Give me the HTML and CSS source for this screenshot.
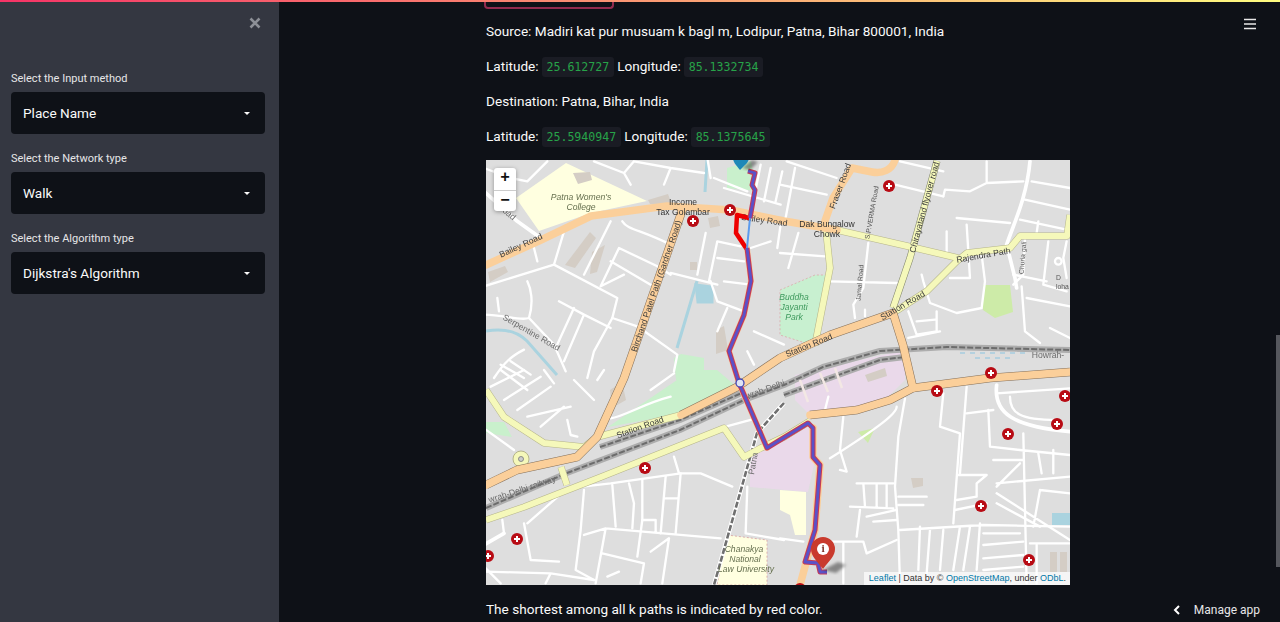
FILE: index.html
```html
<!DOCTYPE html>
<html lang="en">
<head>
<meta charset="utf-8">
<title>Shortest Path</title>
<link rel="stylesheet" href="styles.css">
</head>
<body>
<div class="decoration"></div>
<aside class="sidebar">
  <div class="sidebar-head">
    <svg class="close-icon" viewBox="0 0 12 12"><path d="M1.5 1.5l9 9M10.5 1.5l-9 9"/></svg>
  </div>
  <div class="field">
    <label class="field-label">Select the Input method</label>
    <div class="select"><span>Place Name</span><i class="caret"></i></div>
  </div>
  <div class="field">
    <label class="field-label">Select the Network type</label>
    <div class="select"><span>Walk</span><i class="caret"></i></div>
  </div>
  <div class="field">
    <label class="field-label">Select the Algorithm type</label>
    <div class="select"><span>Dijkstra's Algorithm</span><i class="caret"></i></div>
  </div>
</aside>
<main class="main">
  <div class="column">
    <div class="cut-button"></div>
    <p class="line first">Source: Madiri kat pur musuam k bagl m, Lodipur, Patna, Bihar 800001, India</p>
    <p class="line">Latitude: <code>25.612727</code> Longitude: <code>85.1332734</code></p>
    <p class="line">Destination: Patna, Bihar, India</p>
    <p class="line">Latitude: <code>25.5940947</code> Longitude: <code>85.1375645</code></p>
    <div class="map">
      <svg class="map-svg" viewBox="486 160 584 425">
        <defs>
          <filter id="pinblur"><feGaussianBlur stdDeviation="1.5"/></filter>
        </defs>
        <g class="soft">
          <rect x="486" y="160" width="584" height="425" class="land"/>
          <!-- areas -->
          <polygon class="college" points="516,198 566,163 647,201 591,213 539,231"/>
          <polygon class="park" points="727,168 751,161 757,191 727,188"/>
          <polygon class="park" points="674,358 681,354 704,358 704,378 676,380"/>
          <polygon class="bud" points="780,290 815,275 827,275 812,345 780,335"/>
          <polygon class="grass" points="983,285 1010,285 1013,312 995,318 983,310"/>
          <polygon class="park" points="608,427 677,380 677,370 717,370 737,387 684,413"/>
          <polygon class="park" points="486,422 504,422 512,437 486,433"/>
          <polygon class="lilac" points="795,375 905,350 905,380 880,405 810,415 795,400"/>
          <polygon class="lilac" points="750,487 750,448 784,440 808,426 815,460 808,492"/>
          <polygon class="college" points="780,490 806,492 806,535 795,535 790,515 780,510"/>
          <polygon class="campus" points="727,535 767,540 767,585 717,585"/>
          <polygon class="grass" points="858,432 875,428 868,443"/>
          <!-- buildings -->
          <g class="bld">
            <polygon points="573,173 590,172 592,180 578,184"/>
            <polygon points="488,272 505,266 508,272 490,282"/>
            <polygon points="565,265 590,232 596,238 575,268"/>
            <polygon points="592,252 605,245 597,272 590,274"/>
            <polygon points="648,200 668,194 672,205 650,204"/>
            <polygon points="708,218 718,216 720,226 710,228"/>
            <polygon points="690,262 697,262 697,270 690,270"/>
            <polygon points="716,330 724,326 728,350 716,354"/>
            <polygon points="610,390 622,382 626,400 612,408"/>
            <polygon points="865,375 885,368 887,376 868,382"/>
            <polygon points="911,478 923,478 923,486 913,488"/>
            <polygon points="1050,552 1057,552 1057,572 1050,572"/>
            <polygon points="1060,552 1067,552 1067,572 1060,572"/>
          </g>
          <!-- water -->
          <g class="water">
            <path d="M486 331C503 328 517 331 527 341L557 375"/>
            <path d="M697 281L677 348M707 160L705 192"/>
            <path class="fillw" d="M696 285L712 287L712 302L698 302Z"/>
            <path d="M960 353H1030M975 358H1010" class="dash"/>
          </g>
          <rect x="1052" y="513" width="18" height="12" class="pond"/>
          <!-- white streets: top left -->
          <g class="st" transform="translate(484 158) scale(.3333)">
            <path d="M0 30L80 60L130 70L190 10M330 10L420 45L450 10M450 10L560 30L660 45M560 30L540 80M420 45L440 80"/>
            <path class="wide" d="M0 100L100 190L170 240"/>
            <path d="M240 220L210 320L0 385M210 320L400 420L385 480L330 580L310 660M380 190L300 350M405 270L350 385M405 270L520 325M380 310L500 380M350 385L420 350M150 270L160 310"/>
            <path d="M0 470C60 470 110 490 135 480C150 430 140 390 130 370M135 480L210 560L245 640M40 420L45 460"/>
            <path d="M225 430L300 470L240 610M270 450L215 570M385 480L460 505M300 470L380 510M120 575C70 600 50 630 30 660M50 620L120 660M80 610L140 650"/>
            <path d="M415 190C430 215 470 215 560 260M560 345L700 380M520 325L560 350M665 225L640 350M700 250L675 370M700 250L770 265M700 300L780 310M680 370L700 430L780 460M720 370L800 380M730 450L700 520"/>
            <path d="M690 60L790 100M670 0L680 60M720 90L890 140M830 20L810 120M860 30L840 130M895 40L875 130M800 270L860 250M890 200L880 270M810 520L900 560M790 580L810 620M460 505L580 590L570 640"/>
          </g>
          <!-- white streets: top right -->
          <g class="st" transform="translate(780 158) scale(.3333)">
            <path d="M20 10L170 60M0 80L140 110M45 30L15 190M55 225L25 330M0 285L135 295M360 10L490 40M345 80L490 115"/>
            <path d="M490 115L495 95L570 100L620 75L730 70M620 10L620 70"/>
            <path class="wide" d="M750 10C740 120 700 200 680 260L705 360L710 390"/>
            <path d="M755 70L870 90M735 125L870 155M530 180L690 195M720 185L860 215M775 190L770 225M500 220L500 280M560 200L570 360L510 360"/>
            <path d="M605 290L615 370L605 450L530 465L450 435L430 370L425 350M265 255L250 390L220 440L225 480M255 455L255 475M150 370L350 375"/>
            <path d="M385 460L410 530L470 520L470 460M410 490L465 485M385 540L480 520M735 240L730 350L700 380M805 250L790 380L860 400M860 250L850 300L860 360M700 350L800 370M725 385L735 520L780 555M740 420L870 445M810 510L870 540"/>
            <circle cx="835" cy="310" r="10"/>
          </g>
          <!-- white streets: bottom left -->
          <g class="st" transform="translate(484 370) scale(.3333)">
            <path d="M0 175L90 240M20 50L120 0M60 90L170 20M100 120L200 50M130 140L260 110M170 170L240 110M180 0L210 40M130 60L50 0M250 150L260 195L280 200M270 30L330 90M340 30L360 0M500 60L570 10M380 145C420 140 480 100 560 80"/>
            <path d="M250 355L380 340L590 310L650 310L745 350M130 460L250 355M55 450L60 490M120 460L140 570L225 575"/>
            <path class="wide" d="M0 525L60 490"/>
            <path d="M300 360L290 480L275 600L330 630M385 345L395 470M435 340L450 400L445 475M475 330L475 450L460 560M545 320L530 490M590 310L575 490M545 385L580 385"/>
            <path d="M300 495L365 475L710 505M475 450L515 450L515 485M365 475L335 640M355 550L480 580L470 640M555 505L500 545M555 505L535 640M0 605L200 610L185 640M200 610L330 630M0 590L50 640M370 620L405 605M790 350L785 490M785 490L900 510M725 170L800 150M570 260L585 310"/>
          </g>
          <!-- white streets: bottom right -->
          <g class="st" transform="translate(780 370) scale(.3333)">
            <path d="M145 80L135 120M190 140L180 240L200 305L180 300M350 110C350 130 300 170 150 265M375 85L355 200L345 350L355 480L360 640"/>
            <path d="M490 70L480 170L540 190L520 460M560 50L540 310M560 130L640 120"/>
            <path class="wide" d="M650 45C640 130 700 170 870 185"/>
            <path d="M650 70L870 55M690 80C690 130 720 150 830 150M625 120L630 230L720 240L870 255M730 190L740 640M640 270L730 270M650 350L720 280M650 340L870 320"/>
            <path d="M535 315L620 315L590 340L590 380L530 390M525 420L620 400M650 370L870 510M650 400L780 470M775 250L785 310M820 240L820 310M870 370L780 360M780 360L760 470"/>
            <path d="M230 340L340 340M250 340L255 410M290 340L290 410M320 340L320 410M210 410L340 415M355 380L440 380M355 405L430 405M240 420L230 500M280 455L350 450M260 440L350 420"/>
            <path d="M0 505L70 515M150 515L250 515L260 550L350 510M190 520L190 640M360 480L610 465L870 470M420 470L415 600M450 480L440 610M490 480L480 600M540 470L520 600M570 470L550 600M600 460L590 600"/>
            <path d="M610 490L720 490M610 525L730 515M610 565L730 555M610 600L730 590M750 520L870 520M770 525L770 640"/>
          </g>
          <!-- railways -->
          <g class="rail-band">
            <path d="M486 508L567 473L680 430L744 400L784 385L823 367L880 351L947 347L1070 350"/>
            <path d="M600 447L680 420L744 392M784 395L830 378L880 360L905 357"/>
            <path class="single" d="M784 403L757 433L714 585"/>
          </g>
          <g class="rail">
            <path d="M486 508L567 473L680 430L744 400L784 385L823 367L880 351L947 347L1070 350"/>
            <path d="M600 447L680 420L744 392M784 395L830 378L880 360L905 357"/>
            <path class="single" d="M784 403L757 433L714 585"/>
          </g>
          <g class="platforms">
            <path d="M800 380L808 402M820 373L828 392M835 368L842 388"/>
          </g>
          <!-- yellow roads -->
          <g class="casing">
            <path d="M486 390L504 417L544 443L584 447L597 437"/>
            <path d="M597 437L681 415"/>
            <path d="M486 520L524 507L601 477L724 428L744 457L761 448L784 437L810 421"/>
            <path d="M561 467L567 485"/>
            <path d="M837 230L907 246L958 258"/>
            <path d="M825 221L830 268L815 345"/>
            <path d="M893 313L927 291L957 261L967 253L1010 248L1020 236L1067 236L1070 215"/>
            <path d="M893 308L910 258L937 161" class="fly"/>
          </g>
          <g class="yellow">
            <path d="M486 390L504 417L544 443L584 447L597 437"/>
            <path d="M597 437L681 415"/>
            <path d="M486 520L524 507L601 477L724 428L744 457L761 448L784 437L810 421"/>
            <path d="M561 467L567 485"/>
            <path d="M837 230L907 246L958 258"/>
            <path d="M825 221L830 268L815 345"/>
            <path d="M893 313L927 291L957 261L967 253L1010 248L1020 236L1067 236L1070 215"/>
            <path d="M893 308L910 258L937 161"/>
            <circle cx="521" cy="459" r="8"/>
          </g>
          <circle cx="521" cy="459" r="2.5" class="ring"/>
          <!-- orange roads -->
          <g class="orange-case">
            <path d="M486 485L517 470L577 457L597 437L624 378L683 208"/>
            <path d="M681 415L737 387L780 358L830 335L893 313L903 345L913 388"/>
            <path d="M810 415L857 410L890 400L913 388L990 378L1070 372"/>
          </g>
          <g class="orange">
            <path d="M486 265L541 240L591 216L667 206L731 210L784 221L837 230"/>
            <path d="M825 221L833 198L852 168L872 172C882 174 892 170 895 160"/>
            <path d="M486 485L517 470L577 457L597 437L624 378L683 208"/>
            <path d="M681 415L737 387L780 358L830 335L893 313L903 345L913 388"/>
            <path d="M810 415L857 410L890 400L913 388L990 378L1070 372"/>
            <path d="M813 428L813 457L820 465L815 530L800 585"/>
            <path class="thin" d="M747 248L751 281L744 315L729 351L739 383L767 448"/>
          </g>
          <!-- labels -->
          <g class="lbl">
            <text class="nat mid" x="581" y="200">Patna Women's</text>
            <text class="nat mid" x="581" y="210">College</text>
            <text class="halo mid" x="683" y="205">Income</text>
            <text class="halo mid" x="683" y="215">Tax Golambar</text>
            <text class="mid" transform="translate(522 248) rotate(-25)">Bailey Road</text>
            <text class="mid" transform="translate(764 223) rotate(8)">Bailey Road</text>
            <text class="mid" transform="translate(659 287) rotate(-71)">Birchand Patel Path (Gardner Road)</text>
            <text class="mid gray" transform="translate(530 335) rotate(30)">Serpentine Road</text>
            <text class="mid gray" transform="translate(505 214) rotate(40)">Road</text>
            <text class="mid" transform="translate(843 187) rotate(-70)">Fraser Road</text>
            <text class="mid tiny" transform="translate(874 213) rotate(-80)">S.P.VERMA Road</text>
            <text class="mid tiny" transform="translate(862 283) rotate(-85)">Jamal Road</text>
            <text class="halo mid" x="827" y="227">Dak Bungalow</text>
            <text class="halo mid" x="827" y="237">Chowk</text>
            <text class="mid" transform="translate(927 208) rotate(-75)">Chirayatand flyover road</text>
            <text class="mid" transform="translate(984 258) rotate(-10)">Rajendra Path</text>
            <text class="mid tiny" transform="translate(1025 258) rotate(-85)">Churia gali</text>
            <text class="mid" transform="translate(904 308) rotate(-30)">Station Road</text>
            <text class="mid" transform="translate(810 348) rotate(-22)">Station Road</text>
            <text class="mid" transform="translate(641 430) rotate(-20)">Station Road</text>
            <text class="mid gray" transform="translate(523 492) rotate(-18)">wrah-Delhi railway</text>
            <text class="mid gray" transform="translate(766 392) rotate(-20)">wrah-Delhi</text>
            <text class="mid gray" x="1048" y="358">Howrah-</text>
            <text class="mid gray" transform="translate(756 464) rotate(-80)">Patna</text>
            <text class="tiny" x="1056" y="280">D</text>
            <text class="tiny" x="1056" y="289">loha</text>
            <text class="parkname mid" x="794" y="300">Buddha</text>
            <text class="parkname mid" x="794" y="310">Jayanti</text>
            <text class="parkname mid" x="794" y="320">Park</text>
            <text class="nat mid" x="744" y="552">Chanakya</text>
            <text class="nat mid" x="745" y="562">National</text>
            <text class="nat mid" x="746" y="572">Law University</text>
          </g>
          <!-- hospital markers -->
          <g class="pois">
            <g transform="translate(889 186)"><circle r="6"/><path d="M-3 0H3M0 -3V3"/></g>
            <g transform="translate(693 221)"><circle r="6"/><path d="M-3 0H3M0 -3V3"/></g>
            <g transform="translate(730 210)"><circle r="6"/><path d="M-3 0H3M0 -3V3"/></g>
            <g transform="translate(645 468)"><circle r="6"/><path d="M-3 0H3M0 -3V3"/></g>
            <g transform="translate(517 539)"><circle r="6"/><path d="M-3 0H3M0 -3V3"/></g>
            <g transform="translate(488 556)"><circle r="6"/><path d="M-3 0H3M0 -3V3"/></g>
            <g transform="translate(991 373)"><circle r="6"/><path d="M-3 0H3M0 -3V3"/></g>
            <g transform="translate(937 391)"><circle r="6"/><path d="M-3 0H3M0 -3V3"/></g>
            <g transform="translate(1065 396)"><circle r="6"/><path d="M-3 0H3M0 -3V3"/></g>
            <g transform="translate(1057 424)"><circle r="6"/><path d="M-3 0H3M0 -3V3"/></g>
            <g transform="translate(1008 434)"><circle r="6"/><path d="M-3 0H3M0 -3V3"/></g>
            <g transform="translate(981 506)"><circle r="6"/><path d="M-3 0H3M0 -3V3"/></g>
            <g transform="translate(1029 560)"><circle r="6"/><path d="M-3 0H3M0 -3V3"/></g>
            <g transform="translate(800 589)"><circle r="6"/></g>
          </g>
          <!-- route -->
          <path class="route-red" d="M749 218L737 215L736 233L746 248"/>
          <path class="route-blue" d="M750 218L747 248"/>
          <path class="route-under" d="M748 171L755 173L752 185L755 190L750 218"/>
          <path class="route-under" d="M747 248L751 281L744 315L729 351L739 383L767 448L780 440L808 423L813 428L813 457L820 465L815 530L805 562L818 563L820 572L827 572"/>
          <path class="route-top" d="M748 171L755 173L752 185L755 190L750 218"/>
          <path class="route-top" d="M747 248L751 281L744 315L729 351L739 383L767 448L780 440L808 423L813 428L813 457L820 465L815 530L805 562L818 563L820 572L827 572"/>
          <circle cx="740" cy="383" r="4" class="junction"/>
          <!-- pins -->
          <path class="pin-shadow" d="M823 570L838 562L846 565L836 573Z" filter="url(#pinblur)"/>
          <path class="pin-shadow" d="M742 168L752 160L758 162L750 170Z" filter="url(#pinblur)"/>
          <path class="pin-blue" d="M733 158H749C749 162 745 165 740 170C736 165 733 162 733 158Z"/>
          <path class="pin-red" d="M823 569C816 560 811 556 811 549A12 12 0 0 1 835 549C835 556 830 560 823 569Z"/>
          <circle class="pin-hole" cx="823" cy="549" r="6"/>
          <text class="pin-i" x="823" y="552">i</text>
        </g>
      </svg>
      <div class="zoom-ctrl">
        <div class="zoom-btn">+</div>
        <div class="zoom-btn">&minus;</div>
      </div>
      <div class="attribution"><a>Leaflet</a> | Data by &copy; <a>OpenStreetMap</a>, under <a>ODbL</a>.</div>
    </div>
    <p class="line after-map">The shortest among all k paths is indicated by red color.</p>
  </div>
</main>
<svg class="hamburger" viewBox="0 0 12 12"><path d="M0 1.5H12M0 6H12M0 10.5H12"/></svg>
<div class="manage"><svg class="chev" viewBox="0 0 8 10"><path d="M6 1L2 5L6 9"/></svg><span>Manage app</span></div>
<div class="scrollbar"></div>
</body>
</html>
```
FILE: styles.css
```css
* { box-sizing: border-box; }
html, body { margin: 0; height: 100%; overflow: hidden; }
body {
  display: flex;
  height: 622px;
  background: #0e1117;
  color: #fafafa;
  font-family: Roboto, "Liberation Sans", sans-serif;
  position: relative;
}
.decoration {
  position: absolute; left: 0; right: 0; top: 0; height: 2px; z-index: 5;
  background: linear-gradient(90deg, #f63366, #fffd80);
}
.sidebar {
  width: 279px; flex: none; height: 100%;
  background: #343741;
  padding: 15px 14px 0 11px;
  display: flex; flex-direction: column; gap: 16px;
}
.sidebar-head { height: 39px; display: flex; justify-content: flex-end; }
.close-icon { width: 12px; height: 12px; margin: 2px 4px 0 0; }
.close-icon path { stroke: #8d9097; stroke-width: 2.6; fill: none; }
.field { display: flex; flex-direction: column; gap: 6px; }
.field-label { height: 16px; line-height: 18px; font-size: 11px; color: #e6e6e8; }
.select {
  height: 42px; border-radius: 4px; background: #0e1117;
  display: flex; align-items: center; justify-content: space-between;
  padding: 0 15px 0 12px; font-size: 13.6px;
}
.caret { width: 0; height: 0; border: 3.5px solid transparent; border-top: 3.5px solid #fafafa; border-bottom: 0; }
.main { flex: 1; overflow: hidden; }
.column { width: 584px; margin-left: 207px; }
.cut-button {
  width: 130px; height: 9px; margin-left: -2px;
  border: 2px solid #932b4e; border-top: 0; border-radius: 0 0 4px 4px;
}
.line { margin: 15px 0 0; height: 20px; line-height: 20px; font-size: 13.6px; white-space: nowrap; }
.first { margin-top: 12px; }
code {
  display: inline-block; height: 20px; margin-top: 1px; padding: 0 4.5px; border-radius: 3px;
  background: #1a1c24; color: #27a349; font: 11.6px/20px "DejaVu Sans Mono", monospace;
  vertical-align: top;
}
.map { position: relative; width: 584px; height: 425px; margin-top: 14px; overflow: hidden; background: #ddd; }
.map-svg { display: block; width: 584px; height: 425px; }
.soft { filter: blur(.4px); }
.land { fill: #dedede; }
.college { fill: #ffffe0; }
.park { fill: #c9f0cc; }
.bud { fill: #c8f0d0; stroke: #d9a9a9; stroke-dasharray: 2 2; stroke-width: .8; }
.grass { fill: #cdeba8; }
.lilac { fill: #ead9ea; }
.campus { fill: #ffffe0; stroke: #d8a0a0; stroke-dasharray: 2 2; stroke-width: .8; }
.bld polygon { fill: #d4cdc5; }
.water path { fill: none; stroke: #aad3df; stroke-width: 3; }
.water .fillw { fill: #aad3df; }
.water .dash { stroke-dasharray: 5 5; stroke-width: 1; stroke: #8ac4e0; }
.pond { fill: #aad3df; }
.st { fill: none; stroke: #fff; stroke-width: 7; stroke-linejoin: round; stroke-linecap: round; }
.st .wide { stroke-width: 11; }
.rail-band path { fill: none; stroke: #adadad; stroke-width: 6; stroke-linejoin: round; }
.rail-band .single { stroke: #fff; stroke-width: 4.5; }
.rail path { fill: none; stroke: #6c6c6c; stroke-width: 2; stroke-dasharray: 6 2; stroke-linejoin: round; }
.rail .single { stroke-width: 2.6; stroke: #707070; }
.platforms path { fill: none; stroke: #f3e8e4; stroke-width: 2.5; }
.casing path { fill: none; stroke: #b5b48a; stroke-width: 7; stroke-linejoin: round; }
.casing .fly { stroke: #80846c; }
.yellow path { fill: none; stroke: #f5f8ba; stroke-width: 6; stroke-linejoin: round; }
.yellow circle { fill: #f5f8ba; stroke: #b5b48a; }
.ring { fill: #ccc; stroke: #777; stroke-width: .8; }
.orange-case path { fill: none; stroke: #85705a; stroke-width: 8.5; stroke-linejoin: round; }
.orange path { fill: none; stroke: #fbcf9a; stroke-width: 7.5; stroke-linejoin: round; stroke-linecap: round; }
.orange .thin { stroke-width: 6; stroke: #f5c9a0; }
.lbl text { font: 8.6px "Liberation Sans", sans-serif; fill: #3c3c3c; }
.lbl .mid { text-anchor: middle; }
.lbl .nat { font-style: italic; fill: #66704f; }
.lbl .gray { fill: #6b6b6b; }
.lbl .halo { fill: #333; }
.lbl .tiny { font-size: 6.8px; fill: #555; }
.lbl .parkname { font-style: italic; fill: #3f9a5e; }
.pois circle { fill: #b80b14; }
.pois path { stroke: #fff; stroke-width: 2; fill: none; }
.route-red { fill: none; stroke: #ee0000; stroke-width: 4.5; stroke-linejoin: round; stroke-linecap: round; }
.route-blue { fill: none; stroke: #5b9bee; stroke-width: 2; }
.route-under { fill: none; stroke: #c43a56; stroke-width: 5; stroke-linejoin: round; }
.route-top { fill: none; stroke: #5a52c8; stroke-width: 2.8; stroke-linejoin: round; }
.junction { fill: #dfe3f5; stroke: #4347b5; stroke-width: 1.3; }
.pin-blue { fill: #1e88b8; }
.pin-shadow { fill: rgba(0,0,0,.4); }
.pin-red { fill: #c93a2d; }
.pin-hole { fill: #fff; }
.pin-i { font: bold 8.5px "DejaVu Serif", serif; fill: #7d2a20; text-anchor: middle; }
.zoom-ctrl {
  position: absolute; left: 8px; top: 8px; width: 22px;
  background: #fff; border-radius: 3px; overflow: hidden;
  box-shadow: 0 1px 4px rgba(0,0,0,.35);
}
.zoom-btn { height: 21.5px; text-align: center; color: #111; font: bold 16px/21px "Liberation Mono", monospace; }
.zoom-btn + .zoom-btn { border-top: 1px solid #ccc; }
.attribution {
  position: absolute; right: 0; bottom: 0; height: 13px; padding: 0 4px 0 5px;
  background: rgba(255,255,255,.7); color: #333;
  font: 9px/13px "Liberation Sans", sans-serif; white-space: nowrap;
}
.attribution a { color: #0078a8; }
.after-map { margin-top: 14px; }
.hamburger { position: absolute; left: 1244px; top: 18px; width: 12px; height: 12px; }
.hamburger path { stroke: #e8e8e8; stroke-width: 1.6; fill: none; }
.manage {
  position: absolute; right: 20px; top: 600px; height: 20px;
  display: flex; align-items: center; gap: 13px;
  font-size: 12px; color: #e6e6e8;
}
.chev { width: 8px; height: 10px; }
.chev path { stroke: #fff; stroke-width: 2; fill: none; }
.scrollbar { position: absolute; right: 0; top: 335px; width: 4px; height: 232px; background: #55575d; }
```
